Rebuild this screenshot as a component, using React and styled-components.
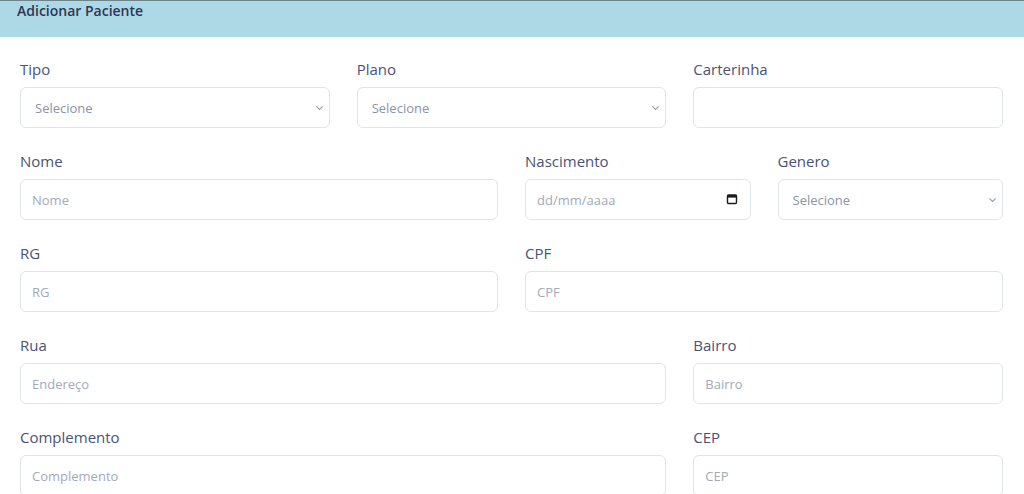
import React from 'react';
import styled, { createGlobalStyle } from 'styled-components';

const GlobalStyle = createGlobalStyle`
	* { box-sizing: border-box; }
	body {
		margin: 0;
		background: #fff;
		font-family: 'Open Sans', 'Noto Sans', sans-serif;
	}
`;

const Header = styled.div`
	height: 37px;
	background: #add8e6;
	border-top: 1px solid #6f858c;
	padding: 1px 17px 0;
`;

const Title = styled.h1`
	margin: 0;
	font-size: 14px;
	line-height: 18px;
	font-weight: 600;
	color: #2f3556;
`;

const Form = styled.form`
	display: grid;
	grid-template-columns: repeat(12, minmax(0, 1fr));
	column-gap: 27px;
	row-gap: 23px;
	padding: 22px 21px 0 20px;
`;

const Field = styled.div`
	grid-column: span ${props => props.span};
	display: flex;
	flex-direction: column;
	gap: 7px;
`;

const Label = styled.label`
	font-size: 15px;
	line-height: 21px;
	color: #4b5274;
`;

const inputStyles = `
	width: 100%;
	height: 41px;
	border: 1px solid #dfe3ea;
	border-radius: 6px;
	background: #fff;
	padding: 0 11px;
	font-family: 'Open Sans', 'Noto Sans', sans-serif;
	font-size: 13px;
	color: #9aa2b3;
	outline: none;
`;

const Input = styled.input`
	${inputStyles}
	&::placeholder { color: #a3aab8; }
`;

const Select = styled.select`
	${inputStyles}
	padding: 0 14px;
	appearance: none;
	color: #8a93a8;
	background-image: url("data:image/svg+xml;utf8,<svg xmlns='http://www.w3.org/2000/svg' width='10' height='6' viewBox='0 0 10 6'><path d='M1.5 1.2 5 4.6 8.5 1.2' fill='none' stroke='%2399a0ad' stroke-width='1.3'/></svg>");
	background-repeat: no-repeat;
	background-position: right 5px center;
	background-size: 9px 6px;
`;

const DateBox = styled.div`
	position: relative;
`;

const DateIcon = styled.svg`
	position: absolute;
	right: 13px;
	top: 14px;
	width: 12px;
	height: 12px;
`;

const fields = [
	{ label: 'Tipo', span: 4, select: true },
	{ label: 'Plano', span: 4, select: true },
	{ label: 'Carterinha', span: 4, placeholder: '' },
	{ label: 'Nome', span: 6, placeholder: 'Nome' },
	{ label: 'Nascimento', span: 3, date: true },
	{ label: 'Genero', span: 3, select: true },
	{ label: 'RG', span: 6, placeholder: 'RG' },
	{ label: 'CPF', span: 6, placeholder: 'CPF' },
	{ label: 'Rua', span: 8, placeholder: 'Endereço' },
	{ label: 'Bairro', span: 4, placeholder: 'Bairro' },
	{ label: 'Complemento', span: 8, placeholder: 'Complemento' },
	{ label: 'CEP', span: 4, placeholder: 'CEP' },
];

const renderControl = (f) => {
	if (f.select) {
		return <Select defaultValue=""><option value="">Selecione</option></Select>;
	}
	if (f.date) {
		return <DateBox>
			<Input type="text" placeholder="dd/mm/aaaa" />
			<DateIcon viewBox="0 0 12 12">
				<rect x="1.5" y="2" width="9" height="8.5" rx="1" fill="none" stroke="#1c1c1c" strokeWidth="1.4" />
				<rect x="1.5" y="2" width="9" height="2.6" fill="#1c1c1c" />
			</DateIcon>
		</DateBox>;
	}
	return <Input type="text" placeholder={f.placeholder} />;
};

const App = () => <>
	<GlobalStyle />
	<Header><Title>Adicionar Paciente</Title></Header>
	<Form>
		{fields.map((f, i) => <Field key={`field-${i}`} span={f.span}>
			<Label>{f.label}</Label>
			{renderControl(f)}
		</Field>)}
	</Form>
</>;

export default App;
